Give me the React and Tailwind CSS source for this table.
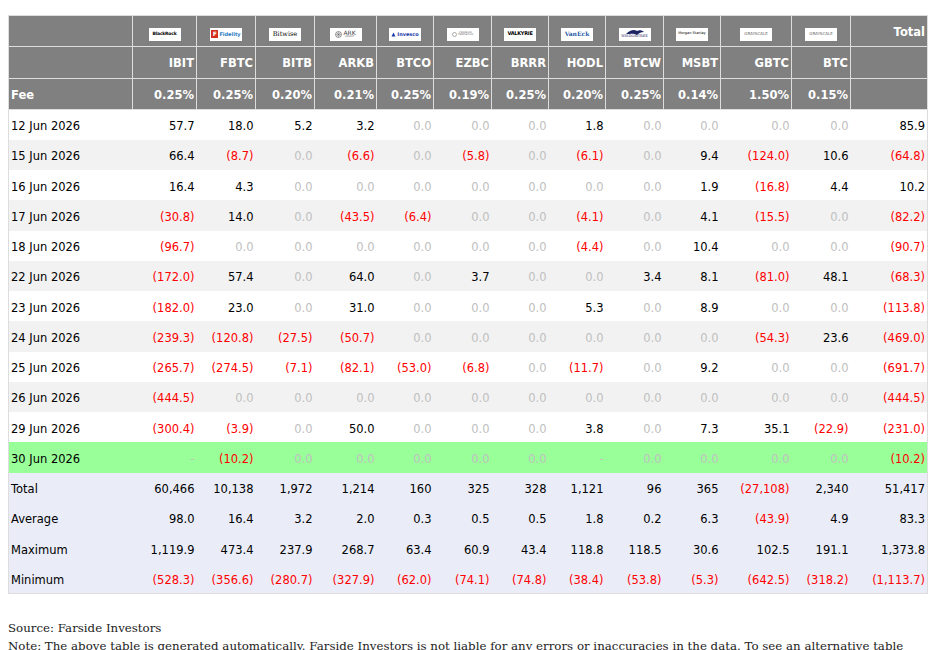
import React from 'react';

const tickers = ['IBIT', 'FBTC', 'BITB', 'ARKB', 'BTCO', 'EZBC', 'BRRR', 'HODL', 'BTCW', 'MSBT', 'GBTC', 'BTC'];
const fees = ['0.25%', '0.25%', '0.20%', '0.21%', '0.25%', '0.19%', '0.25%', '0.20%', '0.25%', '0.14%', '1.50%', '0.15%'];

const rows = [
  ['12 Jun 2026', '57.7', '18.0', '5.2', '3.2', '0.0', '0.0', '0.0', '1.8', '0.0', '0.0', '0.0', '0.0', '85.9'],
  ['15 Jun 2026', '66.4', '(8.7)', '0.0', '(6.6)', '0.0', '(5.8)', '0.0', '(6.1)', '0.0', '9.4', '(124.0)', '10.6', '(64.8)'],
  ['16 Jun 2026', '16.4', '4.3', '0.0', '0.0', '0.0', '0.0', '0.0', '0.0', '0.0', '1.9', '(16.8)', '4.4', '10.2'],
  ['17 Jun 2026', '(30.8)', '14.0', '0.0', '(43.5)', '(6.4)', '0.0', '0.0', '(4.1)', '0.0', '4.1', '(15.5)', '0.0', '(82.2)'],
  ['18 Jun 2026', '(96.7)', '0.0', '0.0', '0.0', '0.0', '0.0', '0.0', '(4.4)', '0.0', '10.4', '0.0', '0.0', '(90.7)'],
  ['22 Jun 2026', '(172.0)', '57.4', '0.0', '64.0', '0.0', '3.7', '0.0', '0.0', '3.4', '8.1', '(81.0)', '48.1', '(68.3)'],
  ['23 Jun 2026', '(182.0)', '23.0', '0.0', '31.0', '0.0', '0.0', '0.0', '5.3', '0.0', '8.9', '0.0', '0.0', '(113.8)'],
  ['24 Jun 2026', '(239.3)', '(120.8)', '(27.5)', '(50.7)', '0.0', '0.0', '0.0', '0.0', '0.0', '0.0', '(54.3)', '23.6', '(469.0)'],
  ['25 Jun 2026', '(265.7)', '(274.5)', '(7.1)', '(82.1)', '(53.0)', '(6.8)', '0.0', '(11.7)', '0.0', '9.2', '0.0', '0.0', '(691.7)'],
  ['26 Jun 2026', '(444.5)', '0.0', '0.0', '0.0', '0.0', '0.0', '0.0', '0.0', '0.0', '0.0', '0.0', '0.0', '(444.5)'],
  ['29 Jun 2026', '(300.4)', '(3.9)', '0.0', '50.0', '0.0', '0.0', '0.0', '3.8', '0.0', '7.3', '35.1', '(22.9)', '(231.0)'],
];

const today = ['30 Jun 2026', '-', '(10.2)', '0.0', '0.0', '0.0', '0.0', '0.0', '-', '0.0', '0.0', '0.0', '0.0', '(10.2)'];

const summary = [
  ['Total', '60,466', '10,138', '1,972', '1,214', '160', '325', '328', '1,121', '96', '365', '(27,108)', '2,340', '51,417'],
  ['Average', '98.0', '16.4', '3.2', '2.0', '0.3', '0.5', '0.5', '1.8', '0.2', '6.3', '(43.9)', '4.9', '83.3'],
  ['Maximum', '1,119.9', '473.4', '237.9', '268.7', '63.4', '60.9', '43.4', '118.8', '118.5', '30.6', '102.5', '191.1', '1,373.8'],
  ['Minimum', '(528.3)', '(356.6)', '(280.7)', '(327.9)', '(62.0)', '(74.1)', '(74.8)', '(38.4)', '(53.8)', '(5.3)', '(642.5)', '(318.2)', '(1,113.7)'],
];

const tone = (v) => {
  if (v.startsWith('(')) return 'text-[#ff0000]';
  if (v === '0.0' || v === '-') return 'text-[#c0c0c0]';
  return 'text-black';
};

// tiny issuer logos, drawn as white chips
const Chip = ({ children }) => (
  <div className="mx-auto mt-[3px] flex h-[13px] w-[32px] items-center justify-center gap-[1px] overflow-hidden bg-white">
    {children}
  </div>
);

const logos = [
  <Chip><span className="text-[4.5px] font-bold tracking-tighter text-black">BlackRock</span></Chip>,
  <Chip>
    <span className="flex h-[8px] w-[7px] items-center justify-center bg-[#d22e1e] text-[6px] font-bold leading-none text-white">F</span>
    <span className="text-[5px] font-bold leading-none text-[#2b7bc0]">Fidelity</span>
  </Chip>,
  <Chip><span className="font-['DejaVu_Serif',serif] text-[6.5px] font-normal leading-none text-black">Bitwise</span></Chip>,
  <Chip>
    <svg width="7" height="7" viewBox="0 0 10 10"><circle cx="5" cy="5" r="4.2" fill="none" stroke="#555" strokeWidth="0.9" /><path d="M5 1v8M1 5h8M2.2 2.2l5.6 5.6M7.8 2.2l-5.6 5.6" stroke="#555" strokeWidth="0.6" /></svg>
    <span className="flex flex-col leading-none">
      <span className="text-[6px] font-normal text-[#444]">ARK</span>
      <span className="text-[2.5px] font-normal text-[#666]">INVEST</span>
    </span>
  </Chip>,
  <Chip>
    <svg width="5" height="5" viewBox="0 0 10 10"><path d="M1 9L5 1l4 8z" fill="#1c3aa9" /></svg>
    <span className="text-[5px] font-bold leading-none text-[#1c3aa9]">Invesco</span>
  </Chip>,
  <Chip>
    <svg width="5" height="5" viewBox="0 0 10 10"><circle cx="5" cy="5" r="4" fill="none" stroke="#777" strokeWidth="1.2" /></svg>
    <span className="flex flex-col leading-none">
      <span className="text-[2.5px] font-normal text-[#666]">FRANKLIN</span>
      <span className="text-[2.5px] font-normal text-[#666]">TEMPLETON</span>
    </span>
  </Chip>,
  <Chip><span className="text-[5px] font-bold tracking-tighter text-black">VALKYRIE</span></Chip>,
  <Chip><span className="font-['DejaVu_Serif',serif] text-[6px] font-bold leading-none text-[#1f5aa6]">VanEck</span></Chip>,
  <Chip>
    <span className="flex flex-col items-center leading-none">
      <svg width="20" height="6" viewBox="0 0 20 6"><path d="M1 5C5 1 9 0 12 2c2-1 5-1 7 1-3 0-5 1-7 3-3-2-7-1-11-1z" fill="#1d2463" /></svg>
      <span className="font-['DejaVu_Serif',serif] text-[3.5px] font-normal text-[#1d2463]">WISDOMTREE</span>
    </span>
  </Chip>,
  <Chip><span className="text-[3.5px] font-normal leading-none text-black">Morgan Stanley</span></Chip>,
  <Chip><span className="text-[4px] font-normal leading-none text-[#666]">GRAYSCALE</span></Chip>,
  <Chip><span className="text-[4px] font-normal leading-none text-[#666]">GRAYSCALE</span></Chip>,
];

const th = 'border border-[#dddddd] bg-[#808080] px-[2px] pt-[3px] font-bold text-white';
const td = 'px-[2px] pt-[4px]';

export default function App() {
  return (
    <div className="bg-white px-2 pt-[15px] font-['DejaVu_Sans',sans-serif] text-[11.5px]">
      <table className="w-[920px] table-fixed border-collapse border border-[#dddddd]">
        <colgroup>
          <col className="w-[124px]" />
          <col className="w-[64px]" />
          <col className="w-[59px]" />
          <col className="w-[59px]" />
          <col className="w-[62px]" />
          <col className="w-[57px]" />
          <col className="w-[58px]" />
          <col className="w-[57px]" />
          <col className="w-[57px]" />
          <col className="w-[58px]" />
          <col className="w-[57px]" />
          <col className="w-[71px]" />
          <col className="w-[59px]" />
          <col className="w-[77px]" />
        </colgroup>
        <thead>
          <tr className="h-[31px]">
            <th className={th}></th>
            {logos.map((logo, i) => (
              <th key={tickers[i]} className={th}>{logo}</th>
            ))}
            <th className={`${th} text-right`}>Total</th>
          </tr>
          <tr className="h-[32px]">
            <th className={th}></th>
            {tickers.map((t) => (
              <th key={t} className={`${th} text-right`}>{t}</th>
            ))}
            <th className={th}></th>
          </tr>
          <tr className="h-[31px]">
            <th className={`${th} text-left`}>Fee</th>
            {fees.map((f, i) => (
              <th key={i} className={`${th} text-right`}>{f}</th>
            ))}
            <th className={th}></th>
          </tr>
        </thead>
        <tbody>
          {rows.map((r, i) => (
            <tr key={r[0]} className={`h-[30.25px] ${i % 2 ? 'bg-[#f2f2f2]' : 'bg-white'}`}>
              <td className={`${td} text-black`}>{r[0]}</td>
              {r.slice(1).map((v, j) => (
                <td key={j} className={`${td} text-right ${tone(v)}`}>{v}</td>
              ))}
            </tr>
          ))}
          <tr className="h-[30.25px] bg-[#99ff99]">
            <td className={`${td} text-black`}>{today[0]}</td>
            {today.slice(1).map((v, j) => (
              <td key={j} className={`${td} text-right ${tone(v)}`}>{v}</td>
            ))}
          </tr>
          {summary.map((r) => (
            <tr key={r[0]} className="h-[30.25px] bg-[#eaedf8]">
              <td className={`${td} text-black`}>{r[0]}</td>
              {r.slice(1).map((v, j) => (
                <td key={j} className={`${td} text-right ${v.startsWith('(') ? 'text-[#ff0000]' : 'text-black'}`}>{v}</td>
              ))}
            </tr>
          ))}
        </tbody>
      </table>
      <div className="mt-[25px] font-['DejaVu_Serif',serif] text-[11.8px] leading-[18px] text-[#222]">
        <p>Source: Farside Investors</p>
        <p>Note: The above table is generated automatically. Farside Investors is not liable for any errors or inaccuracies in the data. To see an alternative table</p>
      </div>
    </div>
  );
}
